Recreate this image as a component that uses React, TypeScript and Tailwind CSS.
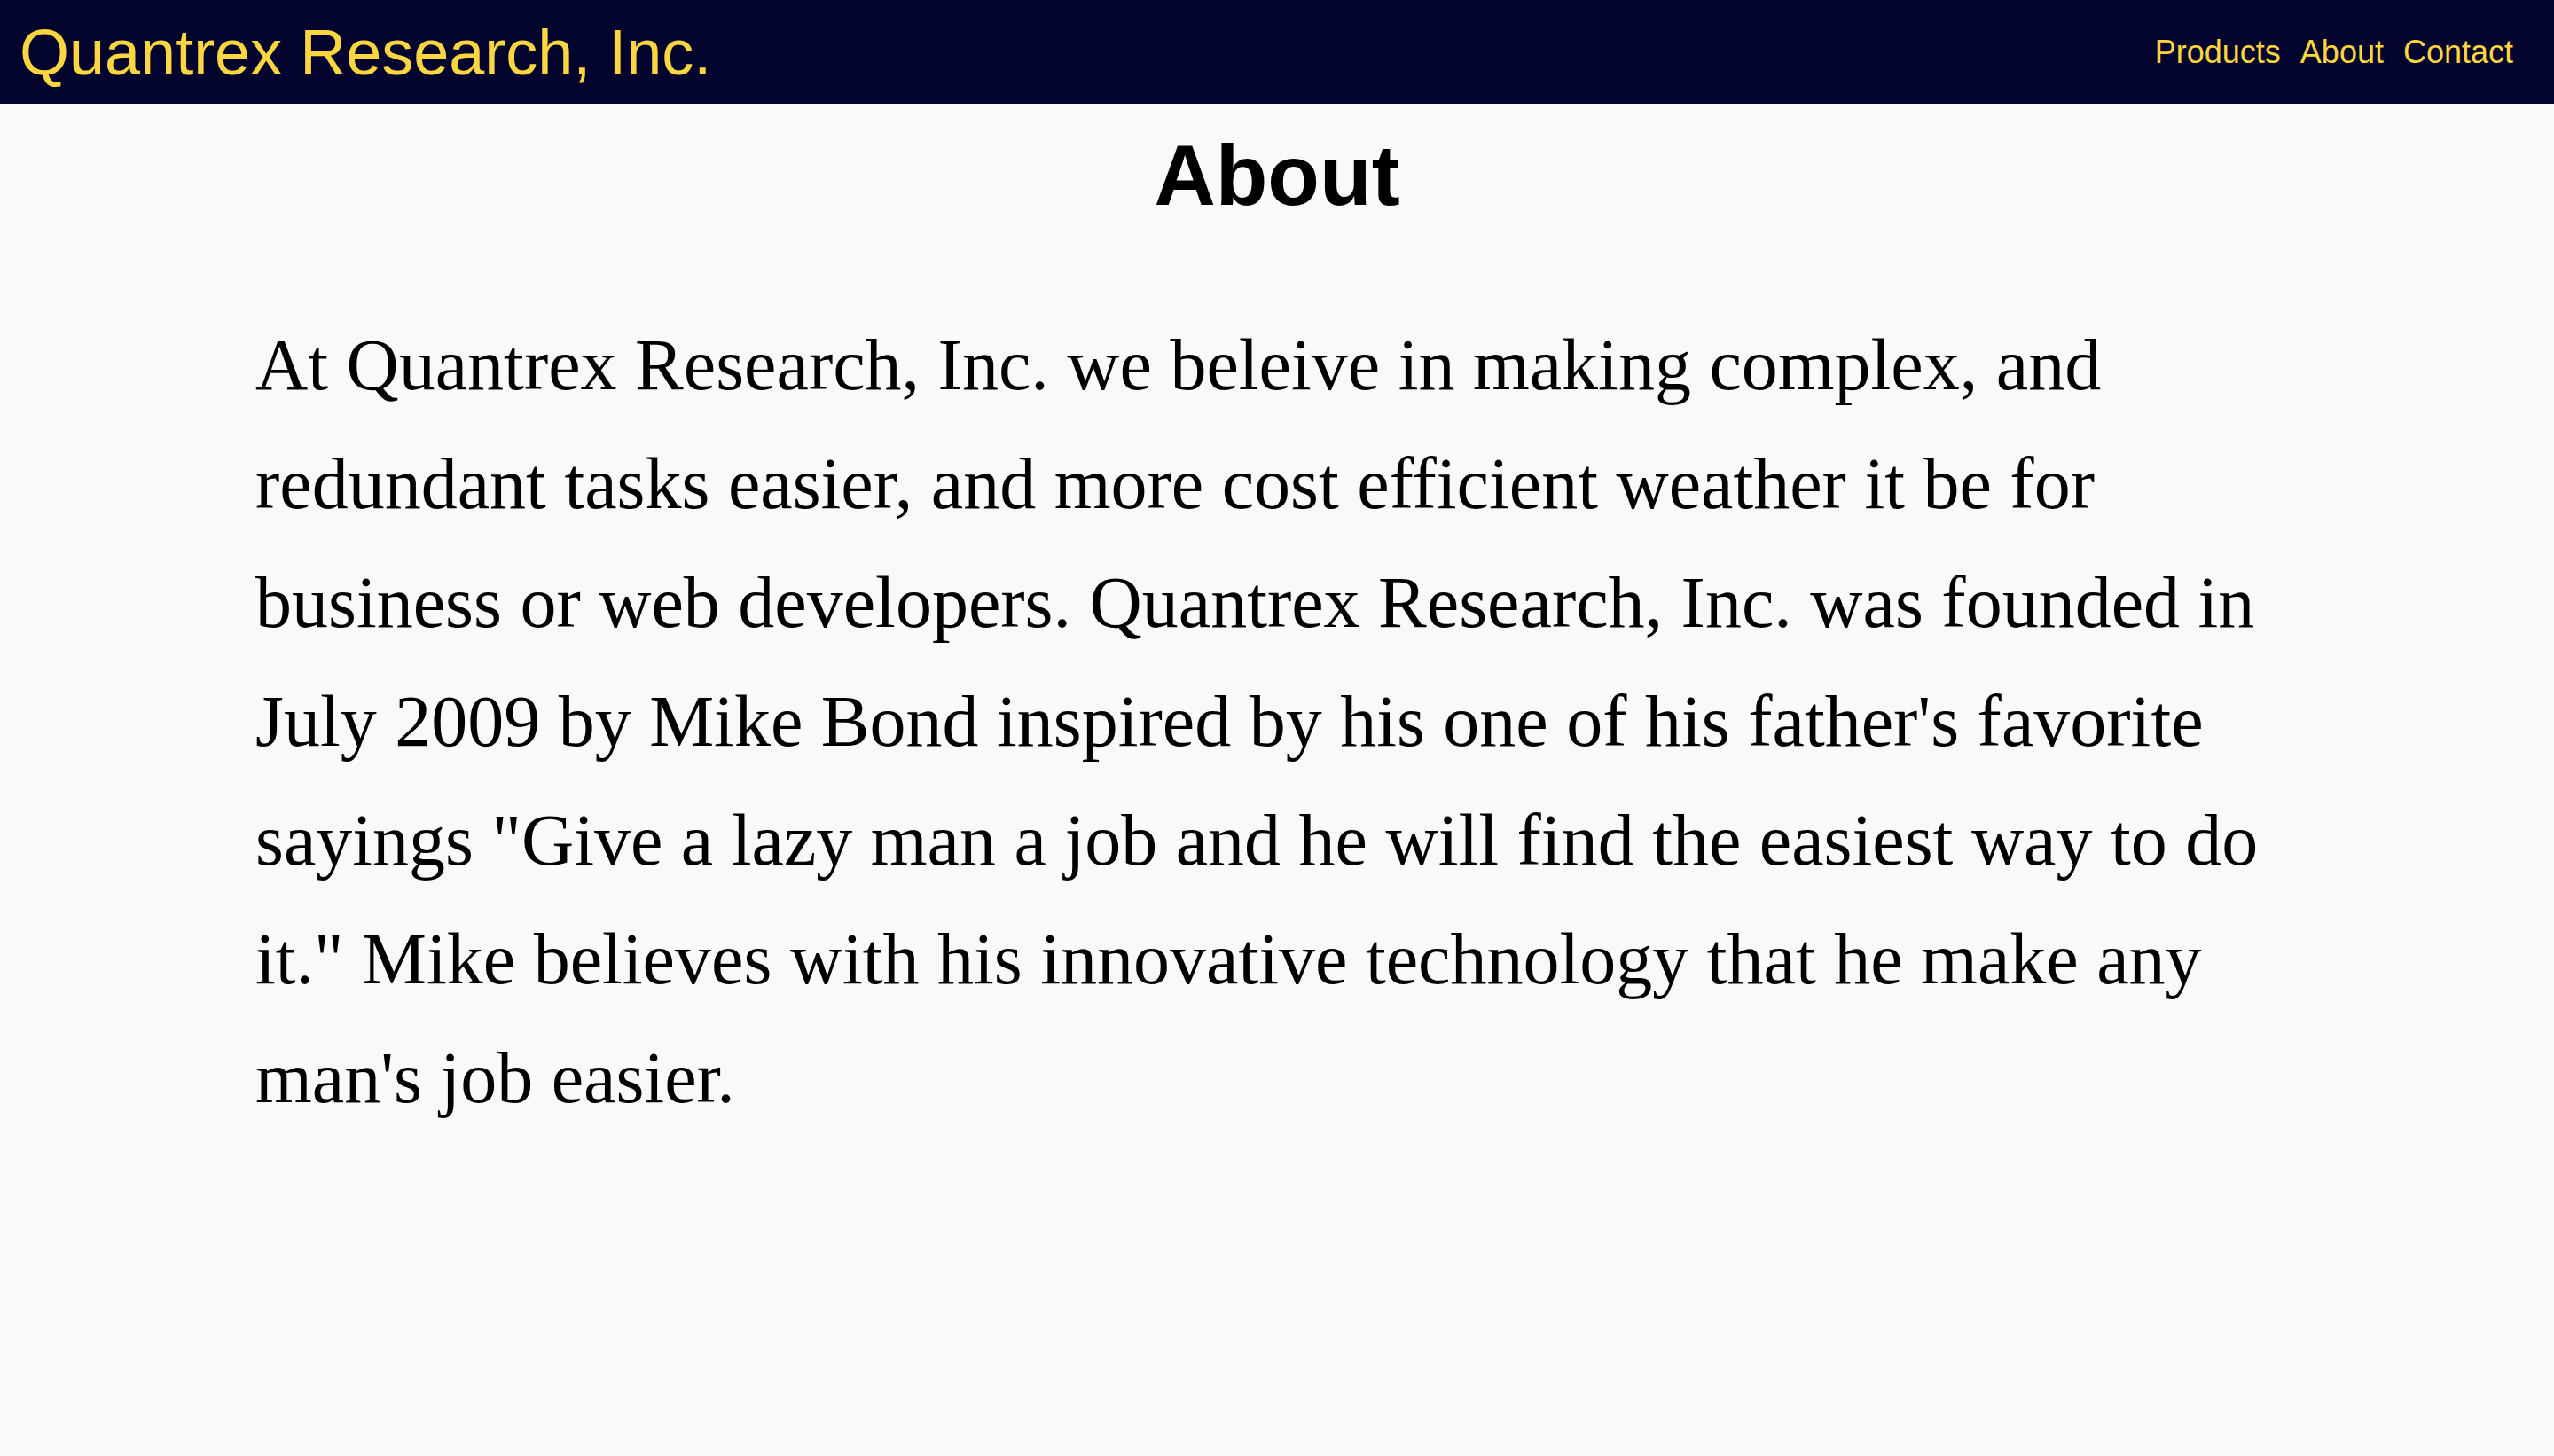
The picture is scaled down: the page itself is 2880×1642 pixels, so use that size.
import React from "react";

const links = ["Products", "About", "Contact"];

export default function App() {
  return (
    <div className="min-h-screen bg-[#f8f9fb] font-['Liberation_Sans',Arial,sans-serif]">
      {/* Top bar */}
      <header className="h-[117px] bg-[#02042e] flex items-center justify-between pl-[22px] pr-[46px]">
        <h1 className="text-[72px] text-[#fcd640] leading-normal">Quantrex Research, Inc.</h1>
        <nav className="flex items-center gap-[22px]">
          {links.map((l) => (
            <a key={l} href="#" className="text-[36px] text-[#fcd640] leading-normal">
              {l}
            </a>
          ))}
        </nav>
      </header>

      <main>
        <h2 className="mt-[26px] text-center text-[96px] font-bold leading-[110px] text-black">About</h2>
        <p className="mx-auto mt-[92px] w-[80%] font-['Liberation_Serif','Times_New_Roman',serif] text-[82px] leading-[134px] text-black">
          At Quantrex Research, Inc. we beleive in making complex, and redundant tasks easier, and more cost
          efficient weather it be for business or web developers. Quantrex Research, Inc. was founded in July
          2009 by Mike Bond inspired by his one of his father's favorite sayings "Give a lazy man a job and he
          will find the easiest way to do it." Mike believes with his innovative technology that he make any
          man's job easier.
        </p>
      </main>
    </div>
  );
}
